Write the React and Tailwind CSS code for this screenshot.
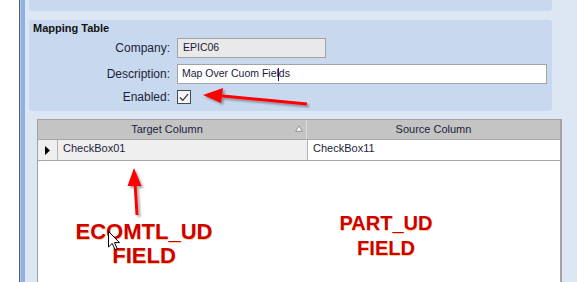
import React from 'react'

const LABEL = 'w-[137px] shrink-0 text-right text-[12px] leading-[14px] text-[#1d1d35]'

function Field({ label, children }) {
  return (
    <div className="flex items-center">
      <span className={LABEL}>{label}</span>
      <div className="ml-[7px]">{children}</div>
    </div>
  )
}

function Annotations() {
  return (
    <svg className="pointer-events-none absolute left-0 top-0" width="577" height="282" viewBox="0 0 577 282">
      <defs>
        <filter id="shade" x="-20%" y="-20%" width="140%" height="140%">
          <feDropShadow dx="2" dy="2" stdDeviation="1.2" floodColor="#000" floodOpacity="0.35" />
        </filter>
      </defs>
      <g filter="url(#shade)" fill="#ff0000" stroke="#ff0000">
        <line x1="307" y1="104" x2="218" y2="95.5" strokeWidth="3" />
        <polygon points="203,95 223,88 221,103" stroke="none" />
        <line x1="137" y1="215" x2="135" y2="183" strokeWidth="3" />
        <polygon points="134,168 127.5,186 141.5,186" stroke="none" />
      </g>
    </svg>
  )
}

function Pointer() {
  return (
    <svg className="pointer-events-none absolute left-[108px] top-[231px]" width="13" height="20" viewBox="0 0 13 20">
      <path d="M0.5 0.5 L0.5 16 L4.2 12.4 L7 18.6 L9.2 17.6 L6.5 11.6 L11.5 11.6 Z" fill="#fff" stroke="#000" strokeWidth="1" strokeLinejoin="round" />
    </svg>
  )
}

export default function App() {
  return (
    <div className="relative flex h-[282px] w-[577px] overflow-hidden font-['Liberation_Sans',Arial,sans-serif]">
      <div className="w-[19px] shrink-0 bg-white" />
      <div className="w-px shrink-0 bg-[#5c5c5c]" />
      <div className="w-[5px] shrink-0 border-l border-[#b5cbee] bg-[#8eb0e2]" />

      <div className="flex flex-1 flex-col bg-[#dde7f4] pl-[4px]">
        <div className="h-[11px] w-[523px] shrink-0 rounded-b-[3px] bg-[#c8d9ef]" />

        <section className="mt-[9px] h-[91px] w-[523px] shrink-0 rounded-[3px] bg-[#c8d9ef] pl-[4px] pt-[1px]">
          <h2 className="text-[11px] font-bold leading-[14px] text-[#111]">Mapping Table</h2>
          <div className="mt-[3px] flex flex-col gap-[6px]">
            <Field label="Company:">
              <div className="flex h-[20px] w-[149px] items-center border border-[#a3a3a3] bg-[#e9e9e9] pl-[5px] text-[10.5px] text-[#1b1b3a]">
                EPIC06
              </div>
            </Field>
            <Field label="Description:">
              <div className="flex h-[20px] w-[370px] items-center border border-[#a3a3a3] bg-white pl-[4px] text-[10.5px] text-[#1b1b3a]">
                Map Over Cuom Fiel
                <span className="mx-[-0.5px] inline-block h-[13px] w-px bg-[#10108a]" />
                ds
              </div>
            </Field>
            <Field label="Enabled:">
              <div className="flex h-[14px] w-[14px] items-center justify-center border border-[#4a4a4a] bg-[#f3f5f8]">
                <svg width="10" height="9" viewBox="0 0 10 9">
                  <path d="M1 4.5 L3.8 7.3 L9 1.2" fill="none" stroke="#333" strokeWidth="1.2" />
                </svg>
              </div>
            </Field>
          </div>
        </section>

        <div className="ml-[8px] mt-[8px] flex w-[525px] flex-1 flex-col border-l border-r-2 border-t border-[#a3a3a3] bg-white text-[11px] text-[#1d1d3c]">
          <div className="flex h-[20px] shrink-0 border-b border-[#a8a8a8] bg-[#c4c4c4]">
            <div className="relative flex w-[269px] items-center justify-center border-r border-[#dcdcdc] pr-[10px]">
              Target Column
              <svg className="absolute right-[3px] top-[5px]" width="8" height="7" viewBox="0 0 8 7">
                <path d="M4 0.8 L7.3 6.3 L0.7 6.3 Z" fill="#fff" stroke="#8a8a8a" strokeWidth="0.9" />
              </svg>
            </div>
            <div className="flex flex-1 items-center justify-center">Source Column</div>
          </div>
          <div className="flex h-[21px] shrink-0 border-b border-[#a8a8a8]">
            <div className="flex w-[20px] items-center justify-center border-r border-[#b4b4b4] bg-[#efefef]">
              <svg width="5" height="9" viewBox="0 0 5 9">
                <path d="M0 0 L5 4.5 L0 9 Z" fill="#000" />
              </svg>
            </div>
            <div className="flex w-[250px] items-center border-r border-[#b4b4b4] bg-[#efefef] pb-[3px] pl-[5px]">CheckBox01</div>
            <div className="flex flex-1 items-center pb-[3px] pl-[5px]">CheckBox11</div>
          </div>
          <div className="flex-1" />
        </div>
      </div>

      <Annotations />

      <div className="pointer-events-none absolute left-[44px] top-[219.5px] w-[200px] text-center text-[22px] font-bold leading-[24px] text-[#cf0000] [text-shadow:0.5px_0.5px_0_rgba(255,140,0,0.45)]">
        ECOMTL_UD
        <br />
        FIELD
      </div>
      <div className="pointer-events-none absolute left-[286px] top-[211px] w-[200px] text-center text-[20px] font-bold leading-[25px] text-[#cf0000] [text-shadow:0.5px_0.5px_0_rgba(255,140,0,0.45)]">
        PART_UD
        <br />
        FIELD
      </div>

      <Pointer />
    </div>
  )
}
